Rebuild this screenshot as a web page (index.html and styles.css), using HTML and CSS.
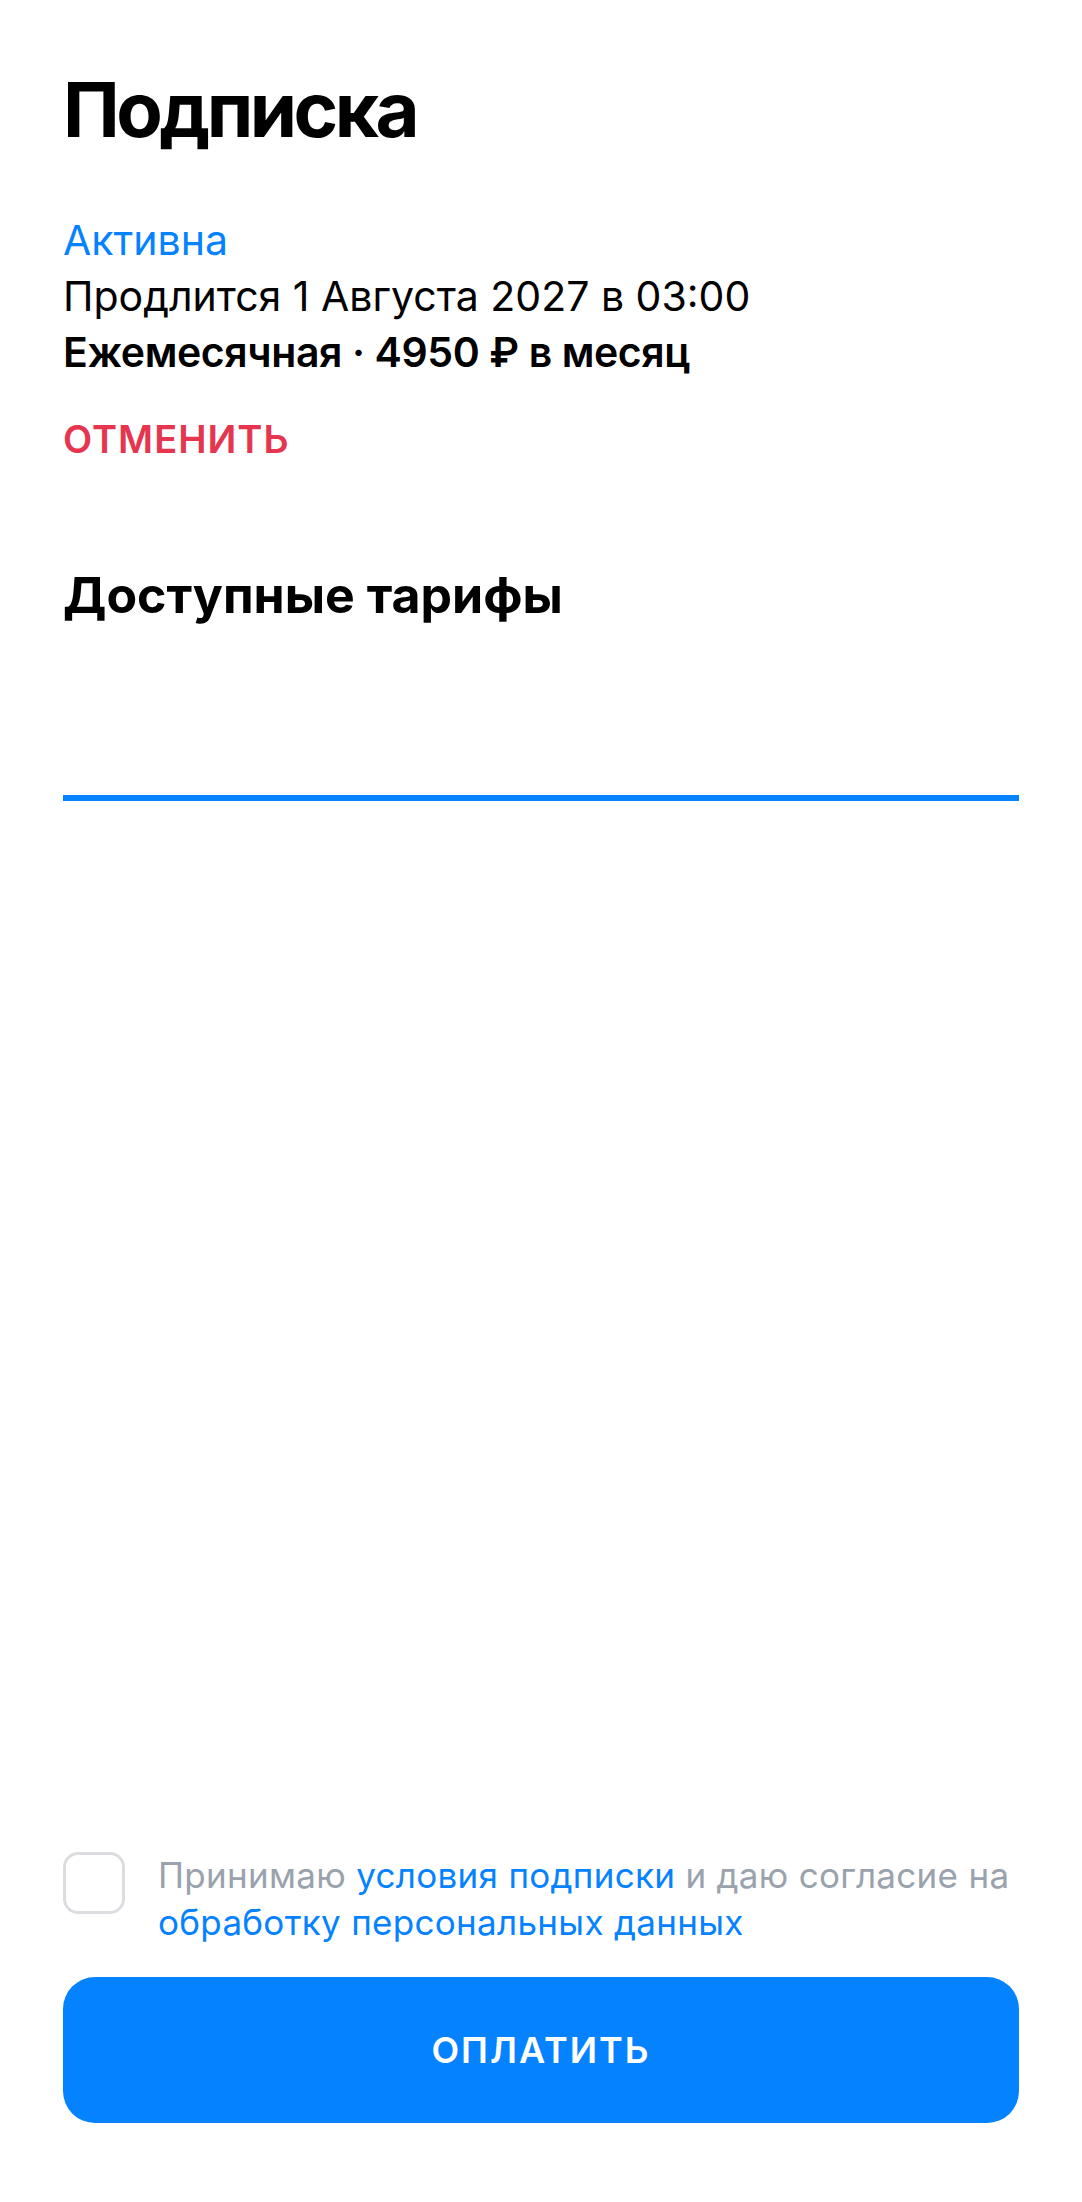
FILE: index.html
```html
<!DOCTYPE html>
<html lang="ru">
<head>
<meta charset="utf-8">
<title>Подписка</title>
<link rel="stylesheet" href="styles.css">
</head>
<body>
<div class="page">
  <main class="content">
    <h1 class="title">Подписка</h1>
    <section class="status">
      <div class="status-active">Активна</div>
      <div class="status-renew">Продлится 1 Августа 2027 в 03:00</div>
      <div class="status-plan">Ежемесячная · 4950 ₽ в месяц</div>
    </section>
    <button class="cancel" type="button">Отменить</button>
    <h2 class="subtitle">Доступные тарифы</h2>
    <div class="tabs"><div class="tab-indicator"></div></div>
  </main>
  <footer class="footer">
    <label class="consent">
      <span class="checkbox"></span>
      <span class="consent-text">Принимаю <a class="link" href="#">условия подписки</a> и даю согласие на<br><a class="link" href="#">обработку персональных данных</a></span>
    </label>
    <button class="pay" type="button">Оплатить</button>
  </footer>
</div>
</body>
</html>
```

FILE: styles.css
```css
* { box-sizing: border-box; }

html, body {
  margin: 0;
  padding: 0;
  background: #ffffff;
}

body {
  font-family: Inter, "Noto Sans", "Liberation Sans", sans-serif;
  color: #000000;
}

.page {
  min-height: 2202px;
  display: flex;
  flex-direction: column;
  padding: 64px 63px 79px 63px;
}

.content {
  display: flex;
  flex-direction: column;
  align-items: flex-start;
}

.title {
  margin: 0;
  font-size: 76px;
  line-height: 90px;
  font-weight: 700;
  letter-spacing: -3.5px;
}

.status {
  margin-top: 58px;
  display: flex;
  flex-direction: column;
  font-size: 41px;
  line-height: 56px;
}

.status-active { color: #0582ff; }

.status-renew { color: #000; }

.status-plan {
  color: #000;
  font-weight: 600;
  letter-spacing: -0.4px;
}

.cancel {
  margin-top: 35px;
  padding: 0;
  border: 0;
  background: none;
  font-family: inherit;
  font-size: 38px;
  line-height: 48px;
  font-weight: 600;
  letter-spacing: 1px;
  text-transform: uppercase;
  color: #e6354f;
}

.subtitle {
  margin: 102px 0 0 0;
  font-size: 50px;
  line-height: 60px;
  font-weight: 700;
}

.tabs {
  align-self: stretch;
  height: 176px;
  display: flex;
  align-items: flex-end;
}

.tab-indicator {
  flex: 1;
  height: 6px;
  background: #0582ff;
}

.footer {
  margin-top: auto;
  display: flex;
  flex-direction: column;
  gap: 31px;
}

.consent {
  display: flex;
  align-items: flex-start;
  gap: 33px;
}

.checkbox {
  flex: none;
  width: 62px;
  height: 62px;
  border: 3px solid #dcdde0;
  border-radius: 15px;
}

.consent-text {
  font-size: 35px;
  line-height: 47px;
  letter-spacing: 0.3px;
  color: #99a2ad;
  white-space: nowrap;
}

.link {
  color: #0582ff;
  text-decoration: none;
}

.pay {
  height: 146px;
  border: 0;
  border-radius: 32px;
  background: #0582ff;
  color: #ffffff;
  font-family: inherit;
  font-size: 36px;
  font-weight: 600;
  letter-spacing: 2px;
  text-transform: uppercase;
}
```
